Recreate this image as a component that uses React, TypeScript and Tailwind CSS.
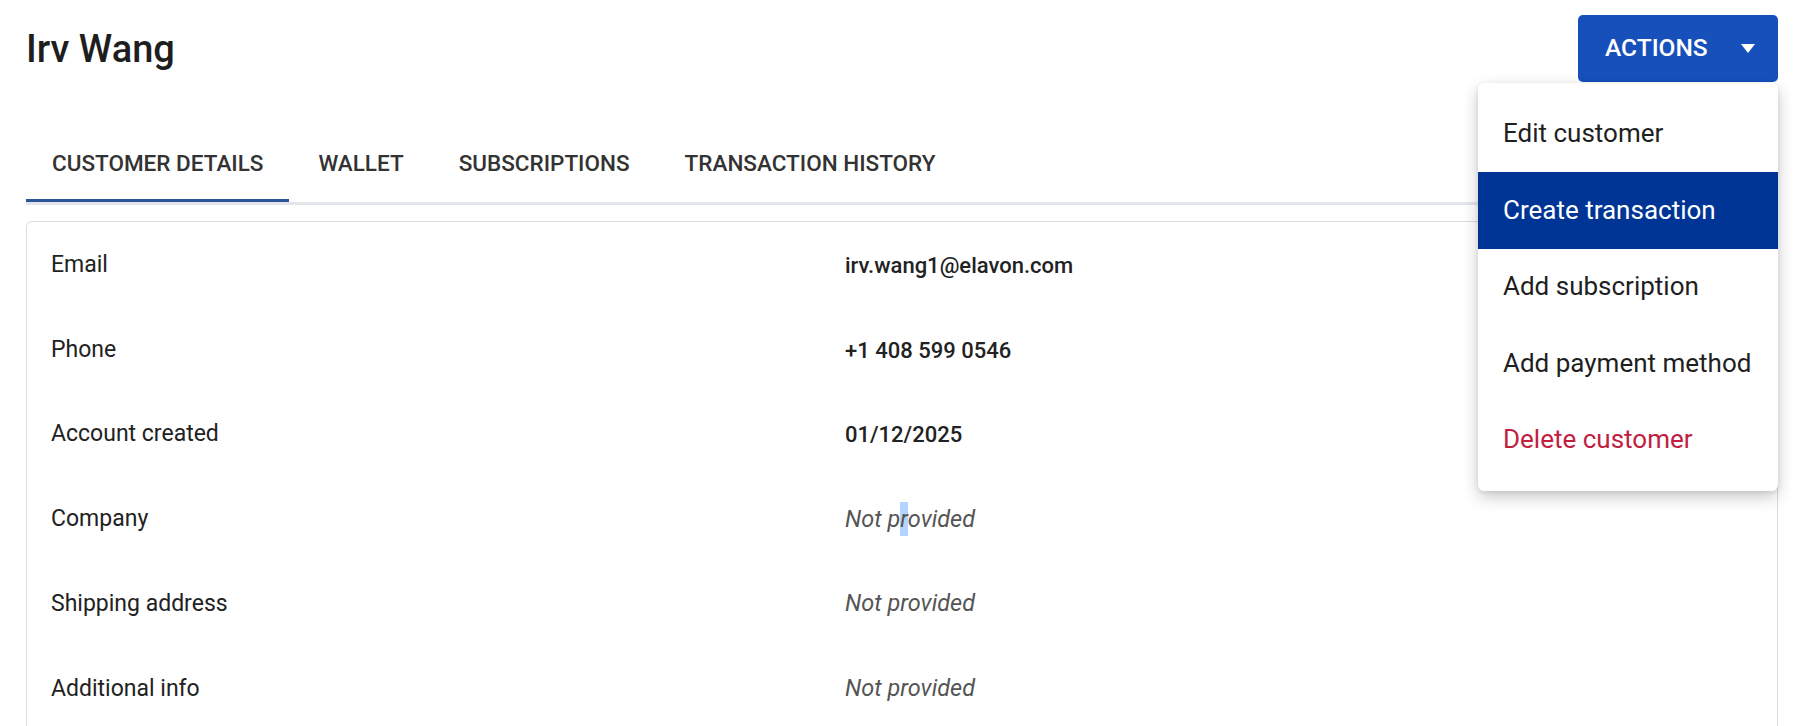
/* ── data ─────────────────────────────────────────────── */
const tabs = ['Customer details', 'Wallet', 'Subscriptions', 'Transaction history']

const details = [
  { label: 'Email', value: 'irv.wang1@elavon.com' },
  { label: 'Phone', value: '+1 408 599 0546' },
  { label: 'Account created', value: '01/12/2025' },
  { label: 'Company', value: null, selected: true },
  { label: 'Shipping address', value: null },
  { label: 'Additional info', value: null },
]

const menuItems = [
  { label: 'Edit customer' },
  { label: 'Create transaction', active: true },
  { label: 'Add subscription' },
  { label: 'Add payment method' },
  { label: 'Delete customer', danger: true },
]

/* ── pieces ───────────────────────────────────────────── */
function NotProvided({ selected }: { selected?: boolean }) {
  if (!selected) return <span className="text-[23.5px] italic text-[#555]">Not provided</span>
  return (
    <span className="text-[23.5px] italic text-[#555]">
      Not p<span className="bg-[#b3d4fc] py-[3px]">r</span>ovided
    </span>
  )
}

function ActionsMenu() {
  return (
    <div className="absolute left-[1478px] top-[83px] w-[300px] rounded-[6px] bg-white py-[12.5px] shadow-[0_6px_16px_rgba(0,0,0,0.22),0_1px_4px_rgba(0,0,0,0.08)]">
      {menuItems.map(item => (
        <div
          key={item.label}
          className={
            item.active
              ? 'flex h-[76.5px] items-center bg-[#003595] px-[25px] text-[26px] text-white'
              : item.danger
                ? 'flex h-[76.5px] items-center px-[25px] text-[26px] text-[#c0203f]'
                : 'flex h-[76.5px] items-center px-[25px] text-[26px] text-[#1f1f1f]'
          }
        >
          {item.label}
        </div>
      ))}
    </div>
  )
}

/* ── page ─────────────────────────────────────────────── */
export default function App() {
  return (
    <div
      className="relative h-[726px] w-full overflow-hidden bg-white pl-[26px] pr-[18px]"
      style={{ fontFamily: 'Roboto, "Noto Sans", sans-serif' }}
    >
      {/* Header */}
      <div className="flex items-center justify-between pt-[15px]">
        <h1 className="text-[38px] font-medium leading-none text-[#1e1e1e]">Irv Wang</h1>
        <button className="flex h-[67px] w-[200px] items-center justify-between rounded-[5px] bg-[#1750bb] pl-[27px] pr-[23px] text-[24.5px] font-medium text-white">
          ACTIONS
          <svg width="14" height="9" viewBox="0 0 14 9" aria-hidden="true">
            <path d="M0 0h14L7 9z" fill="currentColor" />
          </svg>
        </button>
      </div>

      {/* Tabs */}
      <div className="mt-[42px] flex gap-[3px] border-b-[3px] border-[#e4e6ee]">
        {tabs.map((t, i) => (
          <div
            key={t}
            className="relative -mb-[3px] flex h-[81px] items-center px-[26px] pb-[2px] text-[22.5px] font-medium uppercase text-[#333]"
          >
            {t}
            {i === 0 && <span className="absolute bottom-[3px] left-0 right-0 h-[3px] bg-[#2a5599]" />}
          </div>
        ))}
      </div>

      {/* Details card */}
      <div className="mt-[16px] rounded-[6px] border border-[#dcdcdc] px-[24px] pt-[1px] text-[#222]">
        {details.map(d => (
          <div key={d.label} className="flex h-[84.7px] items-center">
            <div className="w-[794px] text-[23px]">{d.label}</div>
            {d.value ? (
              <div className="text-[22px] font-medium">{d.value}</div>
            ) : (
              <NotProvided selected={d.selected} />
            )}
          </div>
        ))}
      </div>

      <ActionsMenu />
    </div>
  )
}
